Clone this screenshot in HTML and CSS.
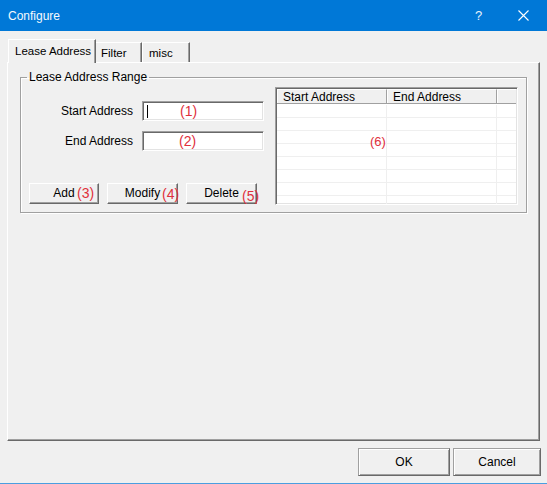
FILE: index.html
```html
<!DOCTYPE html>
<html>
<head>
<meta charset="utf-8">
<title>Configure</title>
<link rel="stylesheet" href="styles.css">
</head>
<body>
<div class="window">
  <div class="titlebar">
    <span class="title">Configure</span>
    <span class="help">?</span>
    <span class="close">
      <svg width="11" height="11" viewBox="0 0 11 11"><path d="M0.5 0.5 L10.5 10.5 M10.5 0.5 L0.5 10.5" stroke="#ffffff" stroke-width="1.1" fill="none"/></svg>
    </span>
  </div>
  <div class="tabs">
    <div class="tab active">Lease Address</div>
    <div class="tab filter">Filter</div>
    <div class="tab misc">misc</div>
  </div>
  <div class="panel">
    <fieldset class="group">
      <legend>Lease Address Range</legend>
      <div class="group-inner">
        <div class="form">
          <div class="row">
            <label class="label">Start Address</label>
            <div class="input"><span class="caret"></span><span class="note n1">(1)</span></div>
          </div>
          <div class="row">
            <label class="label">End Address</label>
            <div class="input"><span class="note n2">(2)</span></div>
          </div>
          <div class="actions">
            <div class="btn b-add">Add<span class="note n3">(3)</span></div>
            <div class="btn b-mod">Modify<span class="note n4">(4)</span></div>
            <div class="btn b-del">Delete<span class="note n5">(5)</span></div>
          </div>
        </div>
        <div class="listview">
          <div class="lv-head">
            <div class="hc c1">Start Address</div>
            <div class="hc c2">End Address</div>
            <div class="hc c3"></div>
          </div>
          <div class="lv-body">
            <div class="lv-row"><div class="cell c1"></div><div class="cell c2"></div><div class="cell c3"></div></div>
            <div class="lv-row"><div class="cell c1"></div><div class="cell c2"></div><div class="cell c3"></div></div>
            <div class="lv-row"><div class="cell c1"></div><div class="cell c2"></div><div class="cell c3"></div></div>
            <div class="lv-row"><div class="cell c1"></div><div class="cell c2"></div><div class="cell c3"></div></div>
            <div class="lv-row"><div class="cell c1"></div><div class="cell c2"></div><div class="cell c3"></div></div>
            <div class="lv-row"><div class="cell c1"></div><div class="cell c2"></div><div class="cell c3"></div></div>
            <div class="lv-row"><div class="cell c1"></div><div class="cell c2"></div><div class="cell c3"></div></div>
            <div class="lv-row"><div class="cell c1"></div><div class="cell c2"></div><div class="cell c3"></div></div>
            <span class="note n6">(6)</span>
          </div>
        </div>
      </div>
    </fieldset>
  </div>
  <div class="footer">
    <div class="dbtn ok">OK</div>
    <div class="dbtn cancel">Cancel</div>
  </div>
</div>
</body>
</html>
```
FILE: styles.css
```css
* { box-sizing: border-box; }
html, body { margin: 0; padding: 0; }
body {
  font-family: "Liberation Sans", Arial, sans-serif;
  font-size: 12px;
  color: #000;
  background: #f0f0f0;
}
.window {
  width: 547px;
  height: 484px;
  background: #f0f0f0;
  border-bottom: 1px solid #4a9ee0;
}
.titlebar {
  height: 31px;
  background: #0078d7;
  color: #fff;
  display: flex;
  align-items: center;
  padding-left: 8px;
}
.title { font-size: 12px; flex: 1; color: #f4f9fd; }
.help { font-size: 13px; width: 8px; margin-right: 35px; color: #e8f2fb; }
.close { width: 11px; height: 11px; margin-right: 18px; display: flex; margin-top: -1px; }
.close svg { display: block; }

.tabs {
  display: flex;
  align-items: flex-end;
  height: 31px;
  padding-left: 8px;
  padding-top: 8px;
  position: relative;
  z-index: 1;
}
.tab {
  height: 20px;
  background: #f0f0f0;
  border-top: 1px solid #fff;
  border-right: 1px solid #696969;
  box-shadow: inset -1px 0 0 #a0a0a0;
  line-height: 19px;
  padding-top: 1px;
  white-space: nowrap;
  font-size: 11.5px;
}
.tab.active {
  width: 88px;
  height: 24px;
  margin-bottom: -1px;
  border-left: 1px solid #fff;
  padding-left: 6px;
  line-height: 20px;
}
.tab.filter { width: 46px; padding-left: 5px; }
.tab.misc { width: 48px; padding-left: 6px; border-left: 1px solid #fff; }

.panel {
  margin-left: 7px;
  width: 533px;
  height: 379px;
  border-top: 1px solid #fff;
  border-left: 1px solid #fff;
  border-right: 1px solid #696969;
  border-bottom: 1px solid #696969;
  box-shadow: inset -1px -1px 0 #a0a0a0;
  padding-top: 0;
}
.group {
  margin: 7px 12px 0 12px;
  padding: 3px 8px 7px 0;
  border: 1px solid #a0a0a0;
  box-shadow: 1px 1px 0 #fff, inset 1px 1px 0 #fff;
  min-width: 0;
}
.group legend {
  padding: 0 2px;
  margin-left: 6px;
  line-height: 14px;
  font-size: 12px;
}
.group-inner {
  display: flex;
  gap: 11px;
}
.form {
  width: 243px;
  padding-top: 14px;
  display: flex;
  flex-direction: column;
  gap: 10px;
}
.row {
  display: flex;
  align-items: center;
  gap: 9px;
  height: 20px;
}
.label {
  width: 112px;
  text-align: right;
}
.input {
  position: relative;
  width: 122px;
  height: 20px;
  background: #fff;
  border-top: 1px solid #a0a0a0;
  border-left: 1px solid #a0a0a0;
  border-right: 1px solid #fff;
  border-bottom: 1px solid #fff;
  box-shadow: inset 1px 1px 0 #696969, inset -1px -1px 0 #e3e3e3;
}
.caret {
  position: absolute;
  left: 4px;
  top: 3px;
  width: 1px;
  height: 13px;
  background: #000;
}
.actions {
  display: flex;
  gap: 8px;
  padding-left: 8px;
  margin-top: 22px;
}
.btn {
  position: relative;
  height: 21px;
  background: #f0f0f0;
  border-top: 1px solid #fff;
  border-left: 1px solid #fff;
  border-right: 1px solid #696969;
  border-bottom: 1px solid #696969;
  box-shadow: inset -1px -1px 0 #a0a0a0;
  display: flex;
  align-items: center;
  justify-content: center;
  padding-bottom: 1px;
}
.b-add { width: 70px; }
.b-mod { width: 71px; }
.b-del { width: 71px; }

.note {
  position: absolute;
  color: #e0303c;
  font-size: 14px;
  line-height: 16px;
  white-space: nowrap;
}
.n1 { left: 37px; top: 1px; }
.n2 { left: 36px; top: 1px; }
.n3 { left: 47px; top: 1px; }
.n4 { left: 54px; top: 2px; }
.n5 { left: 55px; top: 4px; }
.n6 { left: 93px; top: 30px; font-size: 13px; }

.listview {
  width: 243px;
  height: 118px;
  background: #fff;
  border-top: 1px solid #a0a0a0;
  border-left: 1px solid #a0a0a0;
  border-right: 1px solid #fff;
  border-bottom: 1px solid #fff;
  box-shadow: inset 1px 1px 0 #696969, inset -1px -1px 0 #e3e3e3;
  padding: 1px 1px 1px 1px;
  overflow: hidden;
}
.lv-head {
  display: flex;
  height: 15px;
  border-bottom: 1px solid #a0a0a0;
  background: #f0f0f0;
}
.hc {
  height: 14px;
  line-height: 14px;
  padding-left: 5px;
  border-right: 1px solid #a0a0a0;
  border-top: 1px solid #fff;
  border-left: 1px solid #fff;
}
.c1 { width: 110px; }
.c2 { width: 110px; }
.c3 { flex: 1; }
.hc.c3 { border-right: none; }
.lv-body {
  position: relative;
  padding-top: 1px;
}
.lv-row {
  display: flex;
  height: 13px;
  border-bottom: 1px solid #efefef;
}
.cell {
  border-right: 1px solid #efefef;
}
.cell.c3 { border-right: none; }

.footer {
  display: flex;
  justify-content: flex-end;
  gap: 3px;
  margin-top: 7px;
  padding-right: 6px;
}
.dbtn {
  height: 28px;
  display: flex;
  align-items: center;
  justify-content: center;
  background: #f0f0f0;
  border-top: 1px solid #a0a0a0;
  border-left: 1px solid #a0a0a0;
  border-right: 1px solid #696969;
  border-bottom: 1px solid #696969;
  box-shadow: inset 1px 1px 0 #fff, inset -1px -1px 0 #a0a0a0;
  font-size: 12px;
}
.ok { width: 92px; }
.cancel { width: 88px; }
```
